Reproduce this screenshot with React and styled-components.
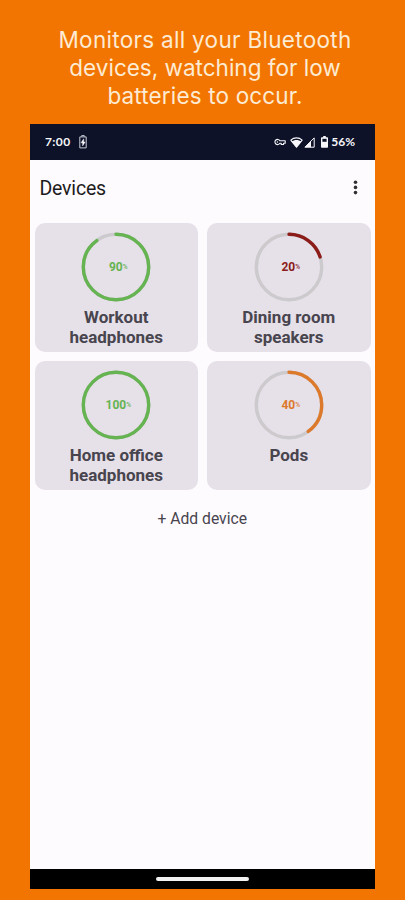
import React from "react";
import styled, { createGlobalStyle } from "styled-components";

const GlobalStyle = createGlobalStyle`
  *, *::before, *::after { box-sizing: border-box; }
  html, body { margin: 0; padding: 0; background: #f27501; }
`;

const Page = styled.main`
  width: 405px;
  height: 900px;
  padding: 26px 30px 0;
  overflow: hidden;
  background: #f27501;
  font-family: Roboto, "Liberation Sans", sans-serif;
`;

const Headline = styled.h1`
  margin: 0;
  padding-left: 5px;
  height: 98px;
  display: flex;
  flex-direction: column;
  align-items: center;
  font: 400 22.5px/28px Inter, "Open Sans", sans-serif;
  color: #fdebd3;
  white-space: nowrap;
`;

const HeadlineLine = styled.span`
  letter-spacing: ${(p) => p.$tracking}px;
`;

const Phone = styled.section`
  width: 344.5px;
  height: 765px;
  display: flex;
  flex-direction: column;
  background: #fefbff;
`;

const StatusBar = styled.div`
  height: 36px;
  flex: none;
  display: flex;
  align-items: center;
  justify-content: space-between;
  padding: 0 19.5px 0 15px;
  background: #0d1228;
  color: #f7f7fb;
  font: 700 12px/16px Lato, Roboto, sans-serif;
`;

const StatusGroup = styled.div`
  display: flex;
  align-items: center;
`;

const StatusText = styled.span`
  letter-spacing: ${(p) => p.$tracking}px;
`;

const Glyph = styled.svg`
  display: block;
  flex: none;
  margin-left: ${(p) => p.$gap || 0}px;
  margin-right: ${(p) => p.$after || 0}px;
`;

const AppBar = styled.header`
  height: 63px;
  flex: none;
  display: flex;
  align-items: flex-start;
  justify-content: space-between;
  padding: 17px 17px 0 9.5px;
`;

const Title = styled.h2`
  margin: 0;
  font-size: 19.5px;
  line-height: 24px;
  font-weight: 400;
  letter-spacing: -0.2px;
  color: #1d1b20;
`;

const MenuButton = styled.button`
  margin-top: 3px;
  padding: 0;
  border: 0;
  background: none;
  color: #313035;
`;

const DeviceGrid = styled.div`
  display: grid;
  grid-template-columns: 163.5px 163.5px;
  grid-auto-rows: 129px;
  gap: 9px;
  padding-left: 4.5px;
`;

const Card = styled.article`
  display: flex;
  flex-direction: column;
  align-items: center;
  padding-top: 8.5px;
  border-radius: 10px;
  background: #e6e0e9;
`;

const Gauge = styled.div`
  display: grid;
  place-items: center;
  width: 70px;
  height: 70px;
  color: ${(p) => p.$color};

  & > * { grid-area: 1 / 1; }
`;

const Ring = styled.svg`
  display: block;
  width: 70px;
  height: 70px;
`;

const Percent = styled.div`
  display: flex;
  align-items: center;
  padding-left: 4px;
  font-size: 12px;
  line-height: 14px;
  font-weight: 700;
`;

const PercentSign = styled.span`
  font-size: 6.5px;
  font-weight: 500;
`;

const DeviceName = styled.h3`
  margin: 5px 0 0;
  width: 120px;
  text-align: center;
  font-size: 17px;
  line-height: 20px;
  font-weight: 700;
  letter-spacing: 0;
  color: #48454e;
`;

const AddButton = styled.button`
  align-self: center;
  margin: 18.5px 0 0;
  padding: 0;
  border: 0;
  background: none;
  font: 400 15.7px/20px Roboto, sans-serif;
  color: #48454e;
`;

const NavBar = styled.div`
  height: 20px;
  flex: none;
  margin-top: auto;
  display: flex;
  align-items: center;
  justify-content: center;
  background: #000;
`;

const HomeHandle = styled.div`
  width: 93px;
  height: 3.5px;
  border-radius: 2px;
  background: #f3f3f3;
`;

const headline = [
  { text: "Monitors all your Bluetooth", tracking: 0.3 },
  { text: "devices, watching for low", tracking: 0 },
  { text: "batteries to occur.", tracking: 0.15 },
];

const devices = [
  { name: "Workout headphones", level: 90, color: "#65b351" },
  { name: "Dining room speakers", level: 20, color: "#8b1c19" },
  { name: "Home office headphones", level: 100, color: "#65b351" },
  { name: "Pods", level: 40, color: "#dd792b" },
];

function DeviceCard({ name, level, color }) {
  return (
    <Card>
      <Gauge $color={color}>
        <Ring viewBox="0 0 70 70" fill="none" strokeWidth="3.4">
          <circle cx="35" cy="35" r="32.7" stroke="#cccacc" />
          <circle
            cx="35"
            cy="35"
            r="32.7"
            stroke="currentColor"
            strokeLinecap="round"
            pathLength="100"
            strokeDasharray={level === 100 ? undefined : `${level} 100`}
            transform="rotate(-90 35 35)"
          />
        </Ring>
        <Percent>
          {level}
          <PercentSign>%</PercentSign>
        </Percent>
      </Gauge>
      <DeviceName>{name}</DeviceName>
    </Card>
  );
}

function SaverIcon() {
  return (
    <Glyph $gap={8} width="8" height="14" viewBox="0 0 8 14" fill="none">
      <path d="M2.7 1.6V.6h2.6v1M.8 1.9h6.4v11H.8z" stroke="#c8cbd5" strokeWidth="1" />
      <path d="M4.7 3.8 2 7.8h1.6v3.1L6.2 7H4.7z" fill="#fff" stroke="#fff" strokeWidth=".4" />
    </Glyph>
  );
}

function VpnKeyIcon() {
  return (
    <Glyph $after={4} width="12" height="8" viewBox="0 0 12 8" fill="none" stroke="currentColor">
      <path d="M5.8 2.7A2.6 2.6 0 1 0 5.8 5.3H7.2V6.5H9.6V5.3H11.2V2.7Z" strokeWidth="1.1" strokeLinejoin="round" />
      <circle cx="3.4" cy="4" r=".7" fill="currentColor" stroke="none" />
    </Glyph>
  );
}

function WifiIcon() {
  return (
    <Glyph $after={1} width="13" height="11" viewBox="0 0 13 11">
      <path d="M.8 3.2C4.1.1 8.9.1 12.2 3.2L6.5 10.2Z" fill="none" stroke="currentColor" strokeWidth="1.1" strokeLinejoin="round" />
      <path d="M1.5 4.6C4.7 2.5 8.3 2.5 11.5 4.6L6.5 10.6Z" fill="currentColor" />
    </Glyph>
  );
}

function SignalIcon() {
  return (
    <Glyph $after={6} width="11" height="11" viewBox="0 0 11 11">
      <path d="M.9 10.2 10.2.9V10.2Z" fill="none" stroke="currentColor" />
      <path d="M.9 10.2 7 4.1V10.2Z" fill="currentColor" />
    </Glyph>
  );
}

function BatteryIcon() {
  return (
    <Glyph $after={3.5} width="7" height="12" viewBox="0 0 7 12">
      <path d="M2.2 0h2.6v1.3h1.5q.7 0 .7.7v9q0 .7-.7.7H.7q-.7 0-.7-.7V2q0-.7.7-.7h1.5Z" fill="currentColor" />
      <path d="M1.4 2.8h4.2v3H1.4z" fill="#0d1228" />
    </Glyph>
  );
}

export default function App() {
  return (
    <>
      <GlobalStyle />
      <Page>
        <Headline>
          {headline.map((line) => (
            <HeadlineLine key={line.text} $tracking={line.tracking}>
              {line.text}
            </HeadlineLine>
          ))}
        </Headline>
        <Phone>
          <StatusBar>
            <StatusGroup>
              <StatusText $tracking={0.4}>7:00</StatusText>
              <SaverIcon />
            </StatusGroup>
            <StatusGroup>
              <VpnKeyIcon />
              <WifiIcon />
              <SignalIcon />
              <BatteryIcon />
              <StatusText $tracking={0}>56%</StatusText>
            </StatusGroup>
          </StatusBar>
          <AppBar>
            <Title>Devices</Title>
            <MenuButton aria-label="More options">
              <Glyph width="5" height="15" viewBox="0 0 5 15" fill="currentColor">
                <circle cx="2.5" cy="2.2" r="1.8" />
                <circle cx="2.5" cy="7.4" r="1.8" />
                <circle cx="2.5" cy="12.6" r="1.8" />
              </Glyph>
            </MenuButton>
          </AppBar>
          <DeviceGrid>
            {devices.map((device) => (
              <DeviceCard key={device.name} {...device} />
            ))}
          </DeviceGrid>
          <AddButton>+ Add device</AddButton>
          <NavBar>
            <HomeHandle />
          </NavBar>
        </Phone>
      </Page>
    </>
  );
}
